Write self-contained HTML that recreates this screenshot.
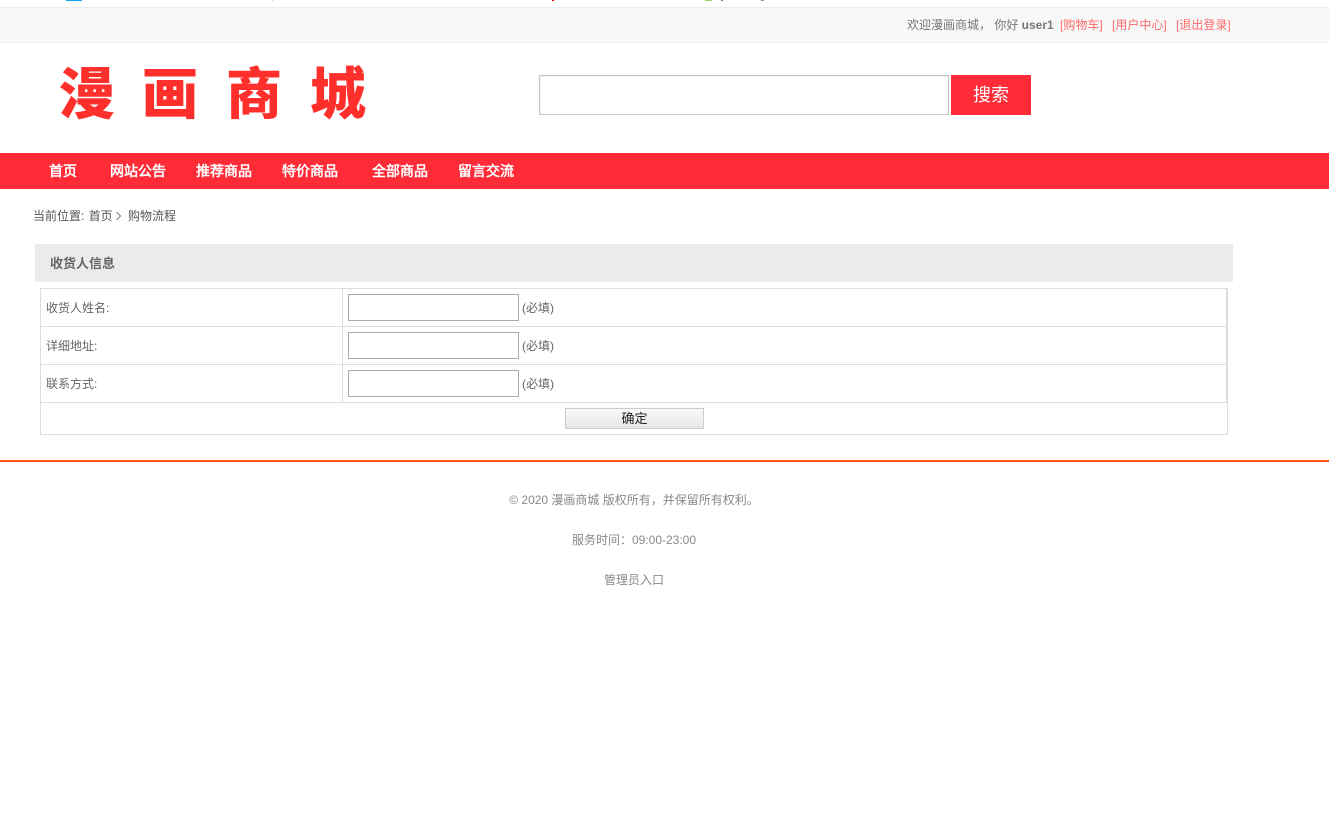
<!DOCTYPE html>
<html lang="zh-CN">
<head>
<meta charset="utf-8">
<title>漫画商城</title>
<style>
html,body{margin:0;padding:0;background:#fff;width:1329px;height:813px;overflow:hidden;}
body{font-family:"Liberation Sans","WenQuanYi Zen Hei","Noto Sans CJK SC",sans-serif;font-size:12px;color:#666;position:relative;}
.a{position:absolute;white-space:nowrap;}
.box{position:absolute;box-sizing:border-box;}
.red{color:#ff6a6a;}
.logo{font-family:"Noto Sans CJK SC",sans-serif;font-weight:900;font-size:56px;line-height:56px;color:#ff302c;top:63px;width:60px;text-align:center;}
.nav{font-family:"Liberation Sans","WenQuanYi Zen Hei",sans-serif;font-weight:700;font-size:14px;line-height:16px;color:#fff;top:163px;}
.l{left:46px;font-size:12px;line-height:14px;color:#666;}
.ln{background:#ddd;position:absolute;}
.ipt{position:absolute;left:348px;width:171px;height:27px;box-sizing:border-box;border:1px solid #aaa;background:#fff;}
.req{left:522px;line-height:14px;color:#666;}
.ft{left:0;width:1268px;text-align:center;line-height:14px;color:#888;}
</style>
</head>
<body>
<div class="box" style="left:66px;top:0;width:16px;height:1px;background:#12a0f0"></div>
<div class="box" style="left:272px;top:0;width:1px;height:1px;background:#ccc"></div>
<div class="box" style="left:552px;top:0;width:2px;height:1px;background:#e00000"></div>
<div class="box" style="left:705px;top:0;width:7px;height:1px;background:#9ad060"></div>
<div class="box" style="left:721px;top:0;width:2px;height:1px;background:#777"></div>
<div class="box" style="left:761px;top:0;width:3px;height:1px;background:#a87"></div>

<div class="box" style="left:0;top:7px;width:1329px;height:36px;background:#f8f8f8;border-top:1px solid #ececec;border-bottom:1px solid #f3f3f3"></div>
<div class="a" style="left:907px;top:18px;line-height:14px;color:#777">欢迎漫画商城， 你好 <b>user1</b></div>
<div class="a red" style="left:1060px;top:18px;line-height:14px">[购物车]</div>
<div class="a red" style="left:1112px;top:18px;line-height:14px">[用户中心]</div>
<div class="a red" style="left:1176px;top:18px;line-height:14px">[退出登录]</div>

<div class="a logo" style="left:57px">漫</div>
<div class="a logo" style="left:140px">画</div>
<div class="a logo" style="left:224px">商</div>
<div class="a logo" style="left:308px">城</div>

<div class="box" style="left:539px;top:75px;width:410px;height:40px;border:1px solid #c6c6c6;box-shadow:inset 1px 1px 0 #eee;background:#fff"></div>
<div class="box" style="left:951px;top:75px;width:80px;height:40px;background:#ff2b37;color:#fff;font-size:18px;line-height:40px;text-align:center">搜索</div>

<div class="box" style="left:0;top:153px;width:1329px;height:36px;background:#ff2b37"></div>
<div class="a nav" style="left:49px">首页</div>
<div class="a nav" style="left:110px">网站公告</div>
<div class="a nav" style="left:196px">推荐商品</div>
<div class="a nav" style="left:282px">特价商品</div>
<div class="a nav" style="left:372px">全部商品</div>
<div class="a nav" style="left:458px">留言交流</div>

<div class="a" style="left:33px;top:209px;line-height:14px;color:#555">当前位置: <span style="margin-left:1px">首页</span></div>
<svg class="a" style="left:115px;top:211px" width="7" height="10" viewBox="0 0 7 10"><path d="M1.5 1L5.5 5L1.5 9" fill="none" stroke="#777" stroke-width="1"/></svg>
<div class="a" style="left:128px;top:209px;line-height:14px;color:#555">购物流程</div>

<div class="box" style="left:35px;top:244px;width:1198px;height:38px;background:#ebebeb"></div>
<div class="a" style="left:50px;top:256px;font-size:13px;font-weight:700;line-height:15px;color:#666">收货人信息</div>

<div class="ln" style="left:40px;top:288px;width:1188px;height:1px"></div>
<div class="ln" style="left:40px;top:326px;width:1187px;height:1px"></div>
<div class="ln" style="left:40px;top:364px;width:1187px;height:1px"></div>
<div class="ln" style="left:40px;top:402px;width:1188px;height:1px"></div>
<div class="ln" style="left:40px;top:434px;width:1188px;height:1px"></div>
<div class="ln" style="left:40px;top:288px;width:1px;height:147px"></div>
<div class="ln" style="left:342px;top:288px;width:1px;height:114px"></div>
<div class="ln" style="left:1226px;top:288px;width:2px;height:114px"></div>
<div class="ln" style="left:1227px;top:402px;width:1px;height:33px"></div>

<div class="a l" style="top:301px">收货人姓名:</div>
<div class="a l" style="top:339px">详细地址:</div>
<div class="a l" style="top:377px">联系方式:</div>
<div class="ipt" style="top:294px"></div>
<div class="ipt" style="top:332px"></div>
<div class="ipt" style="top:370px"></div>
<div class="a req" style="top:301px">(必填)</div>
<div class="a req" style="top:339px">(必填)</div>
<div class="a req" style="top:377px">(必填)</div>

<div class="box" style="left:565px;top:408px;width:139px;height:21px;border:1px solid #ccc;background:linear-gradient(#fafafa,#e6e6e6);text-align:center;color:#222;font-size:13px;line-height:20px">确定</div>

<div class="box" style="left:0;top:460px;width:1329px;height:2px;background:#ff5310"></div>

<div class="a ft" style="top:493px">© 2020 漫画商城 版权所有，并保留所有权利。</div>
<div class="a ft" style="top:533px">服务时间：09:00-23:00</div>
<div class="a ft" style="top:573px">管理员入口</div>
</body>
</html>
